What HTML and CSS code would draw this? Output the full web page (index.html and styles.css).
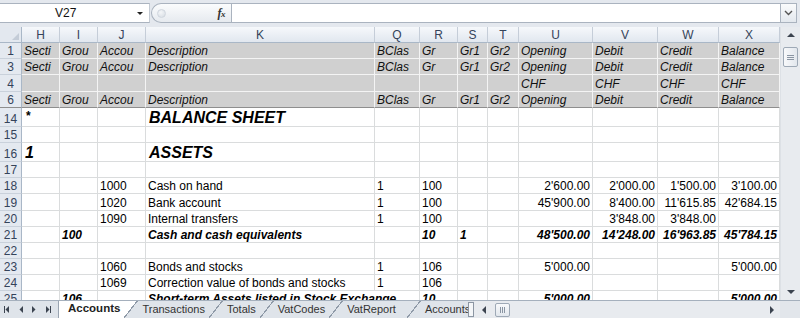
FILE: index.html
```html
<!DOCTYPE html>
<html>
<head>
<meta charset="utf-8">
<link rel="stylesheet" href="styles.css">
</head>
<body>
<div class="app">
  <div class="fbar">
    <div class="namebox"><span class="nb-text">V27</span><span class="nb-arrow"></span></div>
    <div class="fxbox"><span class="fx-dot"></span><span class="fx"><i>f</i><i class="fx-x">x</i></span></div>
    <div class="finput"></div>
    <div class="fexpand"><svg width="9" height="6" viewBox="0 0 9 6"><path d="M1 1 L4.5 4.5 L8 1" fill="none" stroke="#555" stroke-width="1.4"/></svg></div>
  </div>
  <div class="main">
    <div class="sheet">
      <div class="row colhead">
        <div class="corner"></div><div>H</div><div>I</div><div>J</div><div>K</div><div>Q</div><div>R</div><div>S</div><div>T</div><div>U</div><div>V</div><div>W</div><div>X</div>
      </div>
      <div class="row hdr h16">
        <div class="rn">1</div><div>Secti</div><div>Grou</div><div>Accou</div><div>Description</div><div>BClas</div><div>Gr</div><div>Gr1</div><div>Gr2</div><div>Opening</div><div>Debit</div><div>Credit</div><div>Balance</div>
      </div>
      <div class="row hdr h16">
        <div class="rn">3</div><div>Secti</div><div>Grou</div><div>Accou</div><div>Description</div><div>BClas</div><div>Gr</div><div>Gr1</div><div>Gr2</div><div>Opening</div><div>Debit</div><div>Credit</div><div>Balance</div>
      </div>
      <div class="row hdr h17">
        <div class="rn">4</div><div></div><div></div><div></div><div></div><div></div><div></div><div></div><div></div><div>CHF</div><div>CHF</div><div>CHF</div><div>CHF</div>
      </div>
      <div class="row hdr h16 freeze">
        <div class="rn">6</div><div>Secti</div><div>Grou</div><div>Accou</div><div>Description</div><div>BClas</div><div>Gr</div><div>Gr1</div><div>Gr2</div><div>Opening</div><div>Debit</div><div>Credit</div><div>Balance</div>
      </div>
      <div class="row h19">
        <div class="rn">14</div><div class="star">*</div><div></div><div></div><div class="big">BALANCE SHEET</div><div></div><div></div><div></div><div></div><div></div><div></div><div></div><div></div>
      </div>
      <div class="row h16">
        <div class="rn">15</div><div></div><div></div><div></div><div></div><div></div><div></div><div></div><div></div><div></div><div></div><div></div><div></div>
      </div>
      <div class="row h19">
        <div class="rn">16</div><div class="big">1</div><div></div><div></div><div class="big">ASSETS</div><div></div><div></div><div></div><div></div><div></div><div></div><div></div><div></div>
      </div>
      <div class="row h16">
        <div class="rn">17</div><div></div><div></div><div></div><div></div><div></div><div></div><div></div><div></div><div></div><div></div><div></div><div></div>
      </div>
      <div class="row h16">
        <div class="rn">18</div><div></div><div></div><div>1000</div><div>Cash on hand</div><div>1</div><div>100</div><div></div><div></div><div class="n">2'600.00</div><div class="n">2'000.00</div><div class="n">1'500.00</div><div class="n">3'100.00</div>
      </div>
      <div class="row h17">
        <div class="rn">19</div><div></div><div></div><div>1020</div><div>Bank account</div><div>1</div><div>100</div><div></div><div></div><div class="n">45'900.00</div><div class="n">8'400.00</div><div class="n">11'615.85</div><div class="n">42'684.15</div>
      </div>
      <div class="row h16">
        <div class="rn">20</div><div></div><div></div><div>1090</div><div>Internal transfers</div><div>1</div><div>100</div><div></div><div></div><div></div><div class="n">3'848.00</div><div class="n">3'848.00</div><div></div>
      </div>
      <div class="row h16 tot">
        <div class="rn">21</div><div></div><div>100</div><div></div><div>Cash and cash equivalents</div><div></div><div>10</div><div>1</div><div></div><div class="n">48'500.00</div><div class="n">14'248.00</div><div class="n">16'963.85</div><div class="n">45'784.15</div>
      </div>
      <div class="row h16">
        <div class="rn">22</div><div></div><div></div><div></div><div></div><div></div><div></div><div></div><div></div><div></div><div></div><div></div><div></div>
      </div>
      <div class="row h16">
        <div class="rn">23</div><div></div><div></div><div>1060</div><div>Bonds and stocks</div><div>1</div><div>106</div><div></div><div></div><div class="n">5'000.00</div><div></div><div></div><div class="n">5'000.00</div>
      </div>
      <div class="row h16">
        <div class="rn">24</div><div></div><div></div><div>1069</div><div>Correction value of bonds and stocks</div><div>1</div><div>106</div><div></div><div></div><div></div><div></div><div></div><div></div>
      </div>
      <div class="row h16 tot">
        <div class="rn">25</div><div></div><div>106</div><div></div><div class="span2">Short-term Assets listed in Stock Exchange</div><div>10</div><div></div><div></div><div class="n">5'000.00</div><div></div><div></div><div class="n">5'000.00</div>
      </div>
    </div>
    <div class="vscroll">
      <div class="sb-btn"><span class="tri-up"></span></div>
      <div class="vthumb"><span class="grip-h"></span></div>
      <div class="sb-space"></div>
      <div class="sb-btn"><span class="tri-down"></span></div>
    </div>
  </div>
  <div class="bottom">
    <div class="nav">
      <svg width="58" height="17" viewBox="0 0 58 17">
        <g fill="#3c4450">
          <rect x="4" y="5" width="1" height="7"/>
          <path d="M9 5 L9 12 L5.5 8.5 Z"/>
          <path d="M23 5 L23 12 L19.5 8.5 Z"/>
          <path d="M32 5 L32 12 L35.5 8.5 Z"/>
          <path d="M46 5 L46 12 L49.5 8.5 Z"/>
          <rect x="50" y="5" width="1" height="7"/>
        </g>
      </svg>
    </div>
    <div class="tabs">
      <div class="tab active">Accounts</div>
      <div class="tab">Transactions</div>
      <div class="tab">Totals</div>
      <div class="tab">VatCodes</div>
      <div class="tab wide">VatReport</div>
      <div class="tab">Accounts1</div>
    </div>
    <div class="split"></div>
    <div class="hscroll">
      <div class="hs-btn"><span class="tri-left"></span></div>
      <div class="hthumb"><span class="grip-v"></span></div>
      <div class="sb-space"></div>
      <div class="hs-btn"><span class="tri-right"></span></div>
    </div>
    <div class="sb-corner"></div>
  </div>
</div>
</body>
</html>
```

FILE: styles.css
```css
* { box-sizing: border-box; }
body { margin: 0; font-family: "Liberation Sans", Arial, sans-serif; background: #fff; }

.app {
  width: 800px;
  height: 318px;
  overflow: hidden;
  display: flex;
  flex-direction: column;
  background: #dfe4eb;
}

/* formula bar */
.fbar {
  height: 27px;
  flex: none;
  display: flex;
  padding: 3px 3px 4px 0;
  background: #e4e8ee;
}
.namebox {
  width: 150px;
  height: 20px;
  background: #fff;
  border-top: 1px solid #aab3bf;
  border-bottom: 1px solid #aab3bf;
  border-right: 1px solid #c3cad3;
  display: flex;
  align-items: center;
  padding-left: 55px;
  font-size: 12px;
  color: #111;
}
.nb-arrow {
  margin-left: auto;
  margin-right: 6px;
  width: 0;
  height: 0;
  border-left: 3px solid transparent;
  border-right: 3px solid transparent;
  border-top: 3px solid #222;
}
.fxbox {
  width: 80px;
  height: 20px;
  margin-left: 1px;
  border: 1px solid #aab3bf;
  border-right: none;
  border-radius: 10px 0 0 10px;
  background: linear-gradient(#fbfcfd, #e6eaef);
  display: flex;
  align-items: center;
  padding-left: 5px;
}
.fx-dot {
  width: 9px;
  height: 9px;
  border-radius: 50%;
  background: radial-gradient(circle at 40% 35%, #f4f6f8, #d5dbe2);
  border: 1px solid #d0d6de;
}
.fx {
  margin-left: auto;
  margin-right: 6px;
  font-family: "Liberation Serif", serif;
  font-weight: bold;
  font-size: 12px;
  color: #333;
  letter-spacing: -0.5px;
}
.fx-x { font-size: 9px; }
.finput {
  flex: 1;
  height: 20px;
  background: #fff;
  border: 1px solid #aab3bf;
}
.fexpand {
  width: 16px;
  height: 20px;
  border: 1px solid #aab3bf;
  border-left: none;
  background: linear-gradient(#fafbfc, #e3e8ee);
  display: flex;
  align-items: center;
  justify-content: center;
}

/* sheet */
.main { flex: 1; display: flex; min-height: 0; }
.sheet { width: 780px; background: #fff; overflow: hidden; }

.row {
  display: grid;
  grid-template-columns: 22px 38px 38px 48px 229px 45px 38px 30px 31px 74px 65px 61px 61px;
  font-size: 12px;
  color: #000;
}
.h16 { height: 16px; }
.h17 { height: 17px; }
.h19 { height: 19px; }

.row > div {
  border-right: 1px solid #dadcdd;
  border-bottom: 1px solid #dadcdd;
  overflow: hidden;
  white-space: nowrap;
  display: flex;
  align-items: flex-end;
  padding: 0 2px 0 2px;
  line-height: 14px;
}
.row > .n { justify-content: flex-end; }
.row > .span2 { grid-column: span 2; overflow: visible; }

.colhead { height: 16px; }
.colhead > div {
  background: linear-gradient(#f6f8fb, #e1e7ef);
  border-right: 1px solid #c5cdd8;
  border-bottom: 1px solid #a9b7c7;
  justify-content: center;
  align-items: flex-end;
  padding: 0;
  font-size: 12px;
  color: #34435a;
}
.colhead > .corner { position: relative; background: #e3e8ef; border-right-color: #a9b7c7; }
.colhead > .corner::after {
  content: "";
  position: absolute;
  right: 2px;
  bottom: 2px;
  width: 0;
  height: 0;
  border-left: 7px solid transparent;
  border-bottom: 7px solid #c4ccd7;
}

.row > .rn {
  background: #e4e9f0;
  border-right: 1px solid #a9b7c7;
  border-bottom: 1px solid #c9d1db;
  justify-content: center;
  align-items: flex-end;
  padding: 0;
  font-size: 12px;
  color: #34435a;
}

.hdr > div:not(.rn) {
  background: #d0d0d0;
  border-right-color: #f4f4f4;
  border-bottom-color: #f4f4f4;
  font-style: italic;
  color: #111;
}
.freeze > div { border-bottom-color: #8e8e8e !important; }

.row > .big {
  font-size: 16px;
  font-weight: bold;
  font-style: italic;
  line-height: 16px;
  padding-bottom: 0;
  padding-left: 3px;
}
.row > .star { align-items: flex-start; padding-top: 1px; padding-left: 4px; font-weight: bold; }
.tot > div:not(.rn) { font-weight: bold; font-style: italic; }

/* vertical scrollbar */
.vscroll {
  width: 20px;
  display: flex;
  flex-direction: column;
  align-items: center;
  background: #e8ebef;
  border-left: 1px solid #dde1e6;
}
.sb-btn { height: 16px; width: 100%; display: flex; align-items: center; justify-content: center; }
.sb-space { flex: 1; }
.tri-up { width: 0; height: 0; border-left: 4px solid transparent; border-right: 4px solid transparent; border-bottom: 4px solid #3c4450; }
.tri-down { width: 0; height: 0; border-left: 4px solid transparent; border-right: 4px solid transparent; border-top: 4px solid #3c4450; }
.tri-left { width: 0; height: 0; border-top: 4px solid transparent; border-bottom: 4px solid transparent; border-right: 4px solid #3c4450; }
.tri-right { width: 0; height: 0; border-top: 4px solid transparent; border-bottom: 4px solid transparent; border-left: 4px solid #3c4450; }
.vthumb {
  margin-top: 4px;
  width: 15px;
  height: 20px;
  border: 1px solid #9ea9b6;
  border-radius: 2px;
  background: linear-gradient(to right, #f8f9fb, #e2e7ed);
  display: flex;
  align-items: center;
  justify-content: center;
}
.grip-h { width: 7px; height: 5px; border-top: 1px solid #8a95a3; border-bottom: 1px solid #8a95a3; position: relative; }
.grip-h::after { content: ""; position: absolute; left: 0; right: 0; top: 1px; border-top: 1px solid #8a95a3; }

/* bottom bar */
.bottom {
  height: 18px;
  flex: none;
  display: flex;
  background: #dfe4ea;
  border-top: 1px solid #a5b0bd;
}
.nav { width: 58px; flex: none; }
.tabs { width: 410px; flex: none; display: flex; overflow: hidden; }
.tab {
  position: relative;
  flex: none;
  padding: 0 11px;
  font-size: 11px;
  line-height: 16px;
  color: #333;
}
.tab.wide { padding-right: 18px; }
.tab::after {
  content: "";
  position: absolute;
  right: -7px;
  top: -1px;
  width: 14px;
  height: 18px;
  z-index: 1;
  background: linear-gradient(to bottom right, transparent calc(50% - 0.6px), #8f9aa8 calc(50% - 0.6px), #8f9aa8 calc(50% + 0.6px), transparent calc(50% + 0.6px));
}
.tab.active {
  background: #fff;
  margin-top: -1px;
  line-height: 17px;
  padding-left: 9px;
  font-weight: bold;
  font-size: 11.5px;
  color: #222;
  border-left: 1px solid #9aa5b2;
}
.tab.active::after {
  top: 0;
  background: linear-gradient(to bottom right, #fff calc(50% - 0.6px), #8f9aa8 calc(50% - 0.6px), #8f9aa8 calc(50% + 0.6px), #dfe4ea calc(50% + 0.6px));
}
.split {
  width: 6px;
  flex: none;
  margin: 1px 0;
  border: 1px solid #8c96a3;
  background: #f4f6f8;
}
.hscroll {
  flex: 1;
  display: flex;
  align-items: center;
  background: #e8ebef;
}
.hs-btn { width: 16px; height: 100%; display: flex; align-items: center; justify-content: center; }
.hscroll .hs-btn:first-child { margin-left: 2px; }
.hthumb {
  margin-left: 3px;
  width: 15px;
  height: 14px;
  border: 1px solid #9ea9b6;
  border-radius: 2px;
  background: linear-gradient(#f8f9fb, #e2e7ed);
  display: flex;
  align-items: center;
  justify-content: center;
}
.grip-v { width: 5px; height: 6px; border-left: 1px solid #8a95a3; border-right: 1px solid #8a95a3; position: relative; }
.grip-v::after { content: ""; position: absolute; top: 0; bottom: 0; left: 1px; border-left: 1px solid #8a95a3; }
.sb-corner { width: 20px; flex: none; background: #e2e6eb; }
```
